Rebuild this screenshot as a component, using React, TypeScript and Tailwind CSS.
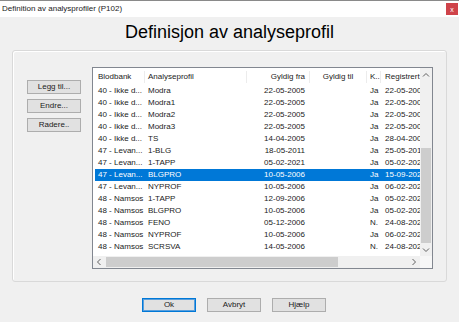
import React from "react";

type Row = {
  bank: string;
  profil: string;
  fra: string;
  ja: string;
  reg: string;
};

const rows: Row[] = [
  { bank: "40 - Ikke d...", profil: "Modra", fra: "22-05-2005", ja: "Ja", reg: "22-05-2005" },
  { bank: "40 - Ikke d...", profil: "Modra1", fra: "22-05-2005", ja: "Ja", reg: "22-05-2005" },
  { bank: "40 - Ikke d...", profil: "Modra2", fra: "22-05-2005", ja: "Ja", reg: "22-05-2005" },
  { bank: "40 - Ikke d...", profil: "Modra3", fra: "22-05-2005", ja: "Ja", reg: "22-05-2005" },
  { bank: "40 - Ikke d...", profil: "TS", fra: "14-04-2005", ja: "Ja", reg: "28-04-2005" },
  { bank: "47 - Levan...", profil: "1-BLG", fra: "18-05-2011", ja: "Ja", reg: "25-05-2011" },
  { bank: "47 - Levan...", profil: "1-TAPP", fra: "05-02-2021", ja: "Ja", reg: "05-02-2021" },
  { bank: "47 - Levan...", profil: "BLGPRO", fra: "10-05-2006", ja: "Ja", reg: "15-09-2021" },
  { bank: "47 - Levan...", profil: "NYPROF", fra: "10-05-2006", ja: "Ja", reg: "06-02-2021" },
  { bank: "48 - Namsos", profil: "1-TAPP", fra: "12-09-2006", ja: "Ja", reg: "05-02-2021" },
  { bank: "48 - Namsos", profil: "BLGPRO", fra: "10-05-2006", ja: "Ja", reg: "05-02-2021" },
  { bank: "48 - Namsos", profil: "FENO", fra: "05-12-2006", ja: "N.", reg: "24-08-2021" },
  { bank: "48 - Namsos", profil: "NYPROF", fra: "10-05-2006", ja: "Ja", reg: "06-02-2021" },
  { bank: "48 - Namsos", profil: "SCRSVA", fra: "14-05-2006", ja: "N.", reg: "24-08-2021" },
];

const SELECTED = 7;

function Chevron({ dir }: { dir: "up" | "down" | "left" | "right" }) {
  const pts = {
    up: "1,4.5 4,1.5 7,4.5",
    down: "1,1.5 4,4.5 7,1.5",
    left: "4.5,1 1.5,4 4.5,7",
    right: "1.5,1 4.5,4 1.5,7",
  }[dir];
  const w = dir === "up" || dir === "down" ? 8 : 6;
  const h = dir === "up" || dir === "down" ? 6 : 8;
  return (
    <svg width={w} height={h} viewBox={`0 0 ${w} ${h}`}>
      <polyline points={pts} fill="none" stroke="#606060" strokeWidth="1" />
    </svg>
  );
}

function SideButton({ label }: { label: string }) {
  return (
    <button
      type="button"
      className="flex h-[14px] w-[54px] items-center justify-center border border-[#adadad] bg-[#e1e1e1] text-[8px] leading-none text-[#1b1b1b]"
    >
      {label}
    </button>
  );
}

function ProfileList() {
  return (
    <div className="flex h-[202px] w-[341px] flex-col border border-[#828790] bg-white">
      <div className="flex h-[188px]">
        <div className="flex-1 overflow-hidden pl-[2px]">
          <div className="flex h-[17px] items-center whitespace-nowrap text-[8px] text-[#1b1b1b]">
            <div className="w-[50px] shrink-0 border-r border-[#ececec] pl-[3px]">Blodbank</div>
            <div className="w-[102px] shrink-0 border-r border-[#ececec] pl-[3px]">Analyseprofil</div>
            <div className="w-[63px] shrink-0 border-r border-[#ececec] pr-[4px] text-right">Gyldig fra</div>
            <div className="w-[57px] shrink-0 border-r border-[#ececec] text-center">Gyldig til</div>
            <div className="w-[14px] shrink-0 border-r border-[#ececec] pl-[3px]">K..</div>
            <div className="w-[39px] shrink-0 overflow-hidden pl-[4px]">Registrert</div>
          </div>
          {rows.map((r, i) => (
            <div
              key={i}
              className={`flex h-[12px] items-center whitespace-nowrap text-[8px] leading-[12px] ${
                i === SELECTED ? "bg-[#0078d7] text-white" : "text-[#1b1b1b]"
              }`}
            >
              <div className="w-[50px] shrink-0 overflow-hidden pl-[3px]">{r.bank}</div>
              <div className="w-[102px] shrink-0 pl-[3px]">{r.profil}</div>
              <div className="w-[63px] shrink-0 pr-[5px] text-right">{r.fra}</div>
              <div className="w-[57px] shrink-0" />
              <div className="w-[14px] shrink-0 pl-[3px]">{r.ja}</div>
              <div className="w-[39px] shrink-0 overflow-hidden pl-[4px]">{r.reg}</div>
            </div>
          ))}
        </div>
        <div className="flex w-[12px] flex-col bg-[#f0f0f0]">
          <div className="flex h-[14px] items-center justify-center">
            <Chevron dir="up" />
          </div>
          <div className="h-[66px]" />
          <div className="mx-[1px] h-[95px] bg-[#cdcdcd]" />
          <div className="flex-1" />
          <div className="flex h-[12px] items-center justify-center">
            <Chevron dir="down" />
          </div>
        </div>
      </div>
      <div className="flex h-[12px]">
        <div className="flex w-[12px] items-center justify-center bg-[#f0f0f0]">
          <Chevron dir="left" />
        </div>
        <div className="flex flex-1 items-center bg-[#f0f0f0] pl-[1px]">
          <div className="h-[10px] w-[232px] bg-[#cdcdcd]" />
        </div>
        <div className="flex w-[12px] items-center justify-center bg-[#f0f0f0]">
          <Chevron dir="right" />
        </div>
        <div className="w-[12px] bg-[#f7f7f7]" />
      </div>
    </div>
  );
}

function DialogButton({ label, focused }: { label: string; focused?: boolean }) {
  return (
    <button
      type="button"
      className={`flex h-[14px] w-[54px] items-center justify-center border bg-[#e1e1e1] text-[8px] leading-none text-[#1b1b1b] ${
        focused
          ? "border-[#0078d7] shadow-[inset_0_0_0_1px_#5a9fdc]"
          : "border-[#adadad]"
      }`}
    >
      {label}
    </button>
  );
}

export default function App() {
  return (
    <div className="h-[322px] w-[459px] overflow-hidden border-t border-[#8a8a8a] bg-[#f0f0f0] font-['Liberation_Sans',Arial,sans-serif]">
      <div className="flex h-[16px] items-center justify-between bg-white pl-[2px] pr-[1px]">
        <span className="text-[8px] text-[#1b1b1b]">Definition av analysprofiler (P102)</span>
        <div className="flex h-[12px] w-[12px] items-center justify-center bg-[#cf434a] text-[7px] leading-none text-white">
          x
        </div>
      </div>

      <h1 className="mt-[5px] text-center text-[18px] leading-[20px] text-black">
        Definisjon av analyseprofil
      </h1>

      <div className="mx-[12px] mt-[8px] flex h-[232px] items-start gap-[11px] rounded-[3px] border border-[#d9d9d9] pl-[14px] pt-[16px] shadow-[inset_1px_1px_0_#ffffff]">
        <div className="mt-[13px] flex flex-col gap-[5px]">
          <SideButton label="Legg til..." />
          <SideButton label="Endre..." />
          <SideButton label="Radere.." />
        </div>
        <ProfileList />
      </div>

      <div className="mt-[16px] flex gap-[11px] pl-[142px]">
        <DialogButton label="Ok" focused />
        <DialogButton label="Avbryt" />
        <DialogButton label="Hjælp" />
      </div>
    </div>
  );
}
